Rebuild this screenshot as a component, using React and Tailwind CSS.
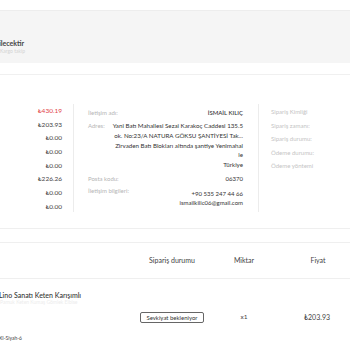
const prices = [
  { v: '₺430.19', red: true },
  { v: '₺203.93' },
  { v: '₺0.00' },
  { v: '₺0.00' },
  { v: '₺0.00' },
  { v: '₺226.26' },
  { v: '₺0.00' },
  { v: '₺0.00' },
];

const orderLabels = ['Sipariş Kimliği', 'Sipariş zamanı:', 'Sipariş durumu:', 'Ödeme durumu:', 'Ödeme yöntemi'];

export default function App() {
  return (
    <div className="w-[350px] h-[350px] overflow-hidden bg-white text-[#333]" style={{ fontFamily: 'Lato, "Open Sans", sans-serif' }}>
      <div className="h-[10px]" />
      <div className="h-[53px] bg-[#f5f5f5] border-t border-[#ededed] flex flex-col justify-end pb-[9px]">
        <p className="text-[7px] leading-[9px] font-bold text-[#444] -ml-[1px]">ilecektir</p>
        <p className="text-[5px] leading-[6px] text-[#d4d4d4]">Kargo takip</p>
      </div>
      <div className="h-[11px]" />
      <div className="border-t border-[#f0f0f0] h-[30px]" />

      <div className="flex">
        <div className="w-[62px] flex flex-col items-end">
          {prices.map((p, i) => (
            <p key={i} className={`h-[13.7px] leading-[13.7px] text-[6.5px] ${p.red ? 'text-[#e2444a]' : 'text-[#444]'}`}>{p.v}</p>
          ))}
        </div>
        <div className="ml-[11px] w-[185px] border-l border-[#ececec] pl-[14px] pr-[15px] pt-[2px] h-[108px] text-[6px]">
          <div className="flex justify-between h-[13px] items-center">
            <span className="text-[#b5b5b5]">İletişim adı:</span>
            <span className="text-[#333] font-medium">İSMAİL KILIÇ</span>
          </div>
          <div className="flex justify-between mt-[2px]">
            <span className="text-[#b5b5b5] leading-[9.8px]">Adres:</span>
            <span className="w-[134px] text-right text-[6.2px] leading-[9.8px] text-[#333]">
              Yani Batı Mahallesi Sezai Karakoç Caddesi 135.5 ok. No:23/A NATURA GÖKSU ŞANTİYESİ Tak... Zirvaden Batı Blokları altında şantiye Yenimahal le
              <br />Türkiye
            </span>
          </div>
          <div className="flex justify-between mt-[4px] h-[10px] items-center">
            <span className="text-[#b5b5b5]">Posta kodu:</span>
            <span className="text-[#333]">06370</span>
          </div>
          <div className="flex justify-between mt-[2px]">
            <span className="text-[#b5b5b5] leading-[9px]">İletişim bilgileri:</span>
            <span className="text-right text-[#333] leading-[9px] mt-[3px]">
              +90 535 247 44 66<br />ismailkilic06@gmail.com
            </span>
          </div>
        </div>
        <div className="border-l border-[#ececec] pl-[12px] h-[108px] flex flex-col">
          {orderLabels.map((l) => (
            <p key={l} className="h-[13.6px] leading-[13.6px] text-[6px] text-[#c4c4c4] pt-[1px]">{l}</p>
          ))}
        </div>
      </div>

      <div className="h-[14px]" />
      <div className="border-t border-[#efefef] h-[14px]" />
      <div className="border-t border-[#efefef] h-[36px] flex items-center text-[7px] text-[#444]">
        <div className="w-[134px]" />
        <div className="w-[76px] text-center">Sipariş durumu</div>
        <div className="w-[68px] text-center">Miktar</div>
        <div className="w-[72px] pl-[8px] text-center">Fiyat</div>
      </div>
      <div className="border-t border-[#efefef] flex">
        <div className="w-[134px] pt-[12px]">
          <p className="text-[7px] leading-[9px] font-medium text-[#333] -ml-[1px]">Lino Sanatı Keten Karışımlı</p>
          <p className="text-[5px] leading-[5px] text-[#ececec]">Pamuk Keten Kumaş Gömlek Elbise</p>
          <p className="mt-[30px] text-[5px] text-[#444] -ml-[1px]">XI-Siyah-6</p>
        </div>
        <div className="w-[76px] flex items-center justify-center pt-[14px]">
          <span className="border border-[#666] rounded-[2px] px-[5px] h-[11px] leading-[9px] text-[6px] text-[#333]">Sevkiyat bekleniyor</span>
        </div>
        <div className="w-[68px] flex items-center justify-center pt-[14px] text-[6.5px] text-[#444]">x1</div>
        <div className="w-[72px] pl-[6px] flex items-center justify-center pt-[14px] text-[7px] text-[#444]">₺203.93</div>
      </div>
    </div>
  );
}
